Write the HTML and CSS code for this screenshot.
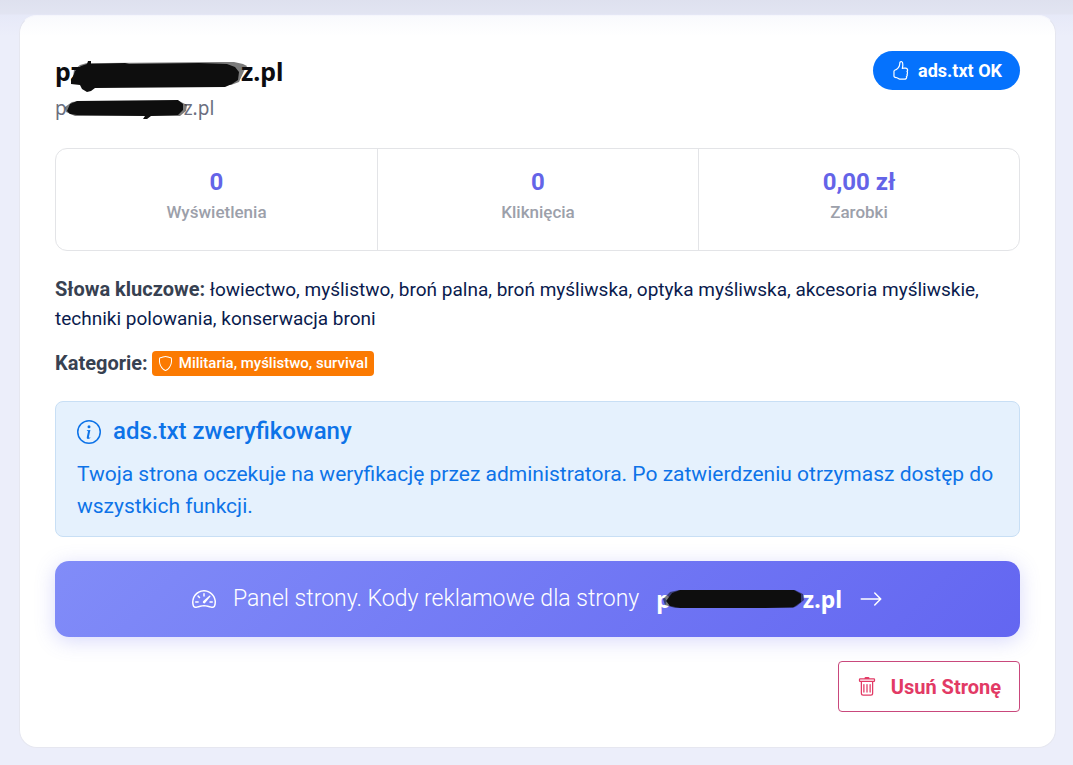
FILE: index.html
```html
<!DOCTYPE html>
<html lang="pl">
<head>
<meta charset="utf-8">
<meta name="viewport" content="width=device-width, initial-scale=1">
<title>Panel strony</title>
<link rel="stylesheet" href="styles.css">
</head>
<body>
<main class="site-card">
  <header class="site-header">
    <div>
      <h1 class="site-name">pz<span class="mask mask-title"><svg viewBox="0 0 178 34" preserveAspectRatio="none" aria-hidden="true"><path class="fray" d="M3 12 9 7 16 5 34 5 150 4 163 4 172 6 176 8 173 13 168 24 160 27 20 27 8 24 2 19Z"/><path d="M2 19 4 13 10 8 16 6 17 3h3v3l34-1 4 1 70-1 28 1 8 3 4 5-1 8-6 4-7 3-130 1-4 3-4 1-5-3-2-4-9-1-5 1Z"/></svg></span>z.pl</h1>
      <p class="site-domain">p<span class="mask mask-domain"><svg viewBox="0 0 126 22" preserveAspectRatio="none" aria-hidden="true"><path class="fray" d="M0 9 7 4 16 3h98l8 4-1 6-6 5H10L1 14Z"/><path d="M2 13 5 6l7-3 101-1 5 4v6l-5 5-27 1-4 3h-4l2-3-68-1-7-1Z"/></svg></span>z.pl</p>
    </div>
    <span class="status-pill">
      <svg class="icon" viewBox="0 0 16 16" aria-hidden="true"><path d="M8.864.046C7.908-.193 7.02.53 6.956 1.466c-.072 1.051-.23 2.016-.428 2.59-.125.36-.479 1.013-1.04 1.639-.557.623-1.282 1.178-2.131 1.41C2.685 7.288 2 7.87 2 8.72v4.001c0 .845.682 1.464 1.448 1.545 1.07.114 1.564.415 2.068.723l.048.03c.272.165.578.348.97.484.397.136.861.217 1.466.217h3.5c.937 0 1.599-.477 1.934-1.064a1.86 1.86 0 0 0 .254-.912c0-.152-.023-.312-.077-.464.201-.263.38-.578.488-.901.11-.33.172-.762.004-1.149.069-.13.12-.269.159-.403.077-.27.113-.568.113-.857 0-.288-.036-.585-.113-.856a2 2 0 0 0-.138-.362 1.9 1.9 0 0 0 .234-1.734c-.206-.592-.682-1.1-1.2-1.272-.847-.282-1.803-.276-2.516-.211a10 10 0 0 0-.443.05 9.4 9.4 0 0 0-.062-4.509A1.38 1.38 0 0 0 9.125.111zM11.5 14.721H8c-.51 0-.863-.069-1.14-.164-.281-.097-.506-.228-.776-.393l-.04-.024c-.555-.339-1.198-.731-2.49-.868-.333-.036-.554-.29-.554-.55V8.72c0-.254.226-.543.62-.65 1.095-.3 1.977-.996 2.614-1.708.635-.71 1.064-1.475 1.238-1.978.243-.7.407-1.768.482-2.85.025-.362.36-.594.667-.518l.262.066c.16.04.258.143.288.255a8.34 8.34 0 0 1-.145 4.725.5.5 0 0 0 .595.644l.003-.001.014-.003.058-.014a9 9 0 0 1 1.036-.157c.663-.06 1.457-.054 2.11.164.175.058.45.3.57.65.107.308.087.67-.266 1.022l-.353.353.353.354c.043.043.105.141.154.315.048.167.075.37.075.581 0 .212-.027.414-.075.582-.05.174-.111.272-.154.315l-.353.353.353.354c.047.047.109.177.005.488a2.2 2.2 0 0 1-.505.805l-.353.353.353.354c.006.005.041.05.041.17a.9.9 0 0 1-.121.416c-.165.288-.503.56-1.066.56z"/></svg>
      ads.txt OK
    </span>
  </header>

  <dl class="stats">
    <div class="stat"><dt>Wyświetlenia</dt><dd>0</dd></div>
    <div class="stat"><dt>Kliknięcia</dt><dd>0</dd></div>
    <div class="stat"><dt>Zarobki</dt><dd>0,00 zł</dd></div>
  </dl>

  <p class="detail"><strong>Słowa kluczowe:</strong> łowiectwo, myślistwo, broń palna, broń myśliwska, optyka myśliwska, akcesoria myśliwskie, techniki polowania, konserwacja broni</p>
  <div class="detail category">
    <strong>Kategorie:</strong>
    <span class="tag">
      <svg class="icon" viewBox="0 0 16 16" aria-hidden="true"><path d="M5.338 1.59a61 61 0 0 0-2.837.856.48.48 0 0 0-.328.39c-.554 4.157.726 7.19 2.253 9.188a10.7 10.7 0 0 0 2.287 2.233c.346.244.652.42.893.533q.18.085.293.118a1 1 0 0 0 .101.025 1 1 0 0 0 .1-.025q.114-.034.294-.118c.24-.113.547-.29.893-.533a10.7 10.7 0 0 0 2.287-2.233c1.527-1.997 2.807-5.031 2.253-9.188a.48.48 0 0 0-.328-.39c-.651-.213-1.75-.56-2.837-.855C9.552 1.29 8.531 1.067 8 1.067c-.53 0-1.552.223-2.662.524zM5.072.56C6.157.265 7.31 0 8 0s1.843.265 2.928.56c1.11.3 2.229.655 2.887.87a1.54 1.54 0 0 1 1.044 1.262c.596 4.477-.787 7.795-2.465 9.99a11.8 11.8 0 0 1-2.517 2.453 7 7 0 0 1-1.048.625c-.28.132-.581.24-.829.24s-.548-.108-.829-.24a7 7 0 0 1-1.048-.625 11.8 11.8 0 0 1-2.517-2.453C1.928 10.487.545 7.169 1.141 2.692A1.54 1.54 0 0 1 2.185 1.43 63 63 0 0 1 5.072.56"/></svg>
      Militaria, myślistwo, survival
    </span>
  </div>

  <section class="notice">
    <h2 class="notice-title">
      <svg class="icon" viewBox="0 0 16 16" aria-hidden="true"><path d="M8 15A7 7 0 1 1 8 1a7 7 0 0 1 0 14m0 1A8 8 0 1 0 8 0a8 8 0 0 0 0 16"/><path d="m8.93 6.588-2.29.287-.082.38.45.083c.294.07.352.176.288.469l-.738 3.468c-.194.897.105 1.319.808 1.319.545 0 1.178-.252 1.465-.598l.088-.416c-.2.176-.492.246-.686.246-.275 0-.375-.193-.304-.533zM9 4.5a1 1 0 1 1-2 0 1 1 0 0 1 2 0"/></svg>
      ads.txt zweryfikowany
    </h2>
    <p class="notice-text">Twoja strona oczekuje na weryfikację przez administratora. Po zatwierdzeniu otrzymasz dostęp do wszystkich funkcji.</p>
  </section>

  <a class="panel-link" href="#">
    <svg class="icon" viewBox="0 0 16 16" aria-hidden="true"><path d="M8 4a.5.5 0 0 1 .5.5V6a.5.5 0 0 1-1 0V4.5A.5.5 0 0 1 8 4M3.732 5.732a.5.5 0 0 1 .707 0l.915.914a.5.5 0 1 1-.708.708l-.914-.915a.5.5 0 0 1 0-.707M2 10a.5.5 0 0 1 .5-.5h1.586a.5.5 0 0 1 0 1H2.5A.5.5 0 0 1 2 10m9.5 0a.5.5 0 0 1 .5-.5h1.5a.5.5 0 0 1 0 1H12a.5.5 0 0 1-.5-.5m.754-4.246a.39.39 0 0 0-.527-.02L7.547 9.31a.91.91 0 1 0 1.302 1.258l3.434-4.297a.39.39 0 0 0-.029-.518z"/><path fill-rule="evenodd" d="M0 10a8 8 0 1 1 15.547 2.661c-.442 1.253-1.845 1.602-2.932 1.25C11.309 13.488 9.475 13 8 13c-1.474 0-3.31.488-4.615.911-1.087.352-2.49.003-2.932-1.25A8 8 0 0 1 0 10m8-7a7 7 0 0 0-6.603 9.329c.203.575.923.876 1.68.63C4.397 12.533 6.358 12 8 12s3.604.532 4.923.96c.757.245 1.477-.056 1.68-.631A7 7 0 0 0 8 3"/></svg>
    <span>Panel strony. Kody reklamowe dla strony</span>
    <strong>p<span class="mask mask-link"><svg viewBox="0 0 140 22" preserveAspectRatio="none" aria-hidden="true"><path class="fray" d="M0 10 7 3 16 1h114l8 4 1 6-7 6-4 2H12L2 16Z"/><path d="m3 12 6-8 8-3h112l7 4v8l-7 5-28 1H17L7 17Z"/></svg></span>z.pl</strong>
    <svg class="icon" viewBox="0 0 16 16" aria-hidden="true"><path fill-rule="evenodd" d="M1 8a.5.5 0 0 1 .5-.5h11.793l-3.147-3.146a.5.5 0 0 1 .708-.708l4 4a.5.5 0 0 1 0 .708l-4 4a.5.5 0 0 1-.708-.708L13.293 8.5H1.5A.5.5 0 0 1 1 8"/></svg>
  </a>

  <button class="delete-button" type="button">
    <svg class="icon" viewBox="0 0 16 16" aria-hidden="true"><path d="M5.5 5.5A.5.5 0 0 1 6 6v6a.5.5 0 0 1-1 0V6a.5.5 0 0 1 .5-.5m2.5 0a.5.5 0 0 1 .5.5v6a.5.5 0 0 1-1 0V6a.5.5 0 0 1 .5-.5m3 .5a.5.5 0 0 0-1 0v6a.5.5 0 0 0 1 0z"/><path d="M14.5 3a1 1 0 0 1-1 1H13v9a2 2 0 0 1-2 2H5a2 2 0 0 1-2-2V4h-.5a1 1 0 0 1-1-1V2a1 1 0 0 1 1-1H6a1 1 0 0 1 1-1h2a1 1 0 0 1 1 1h3.5a1 1 0 0 1 1 1zM4.118 4 4 4.059V13a1 1 0 0 0 1 1h6a1 1 0 0 0 1-1V4.059L11.882 4zM2.5 3h11V2h-11z"/></svg>
    Usuń Stronę
  </button>
</main>
</body>
</html>
```

FILE: styles.css
```css
* {
  box-sizing: border-box;
}

body {
  margin: 0;
  padding: 15px 17px 17px 19px;
  background: #eceefa;
  color: #0a1b4d;
  font-family: Roboto, "Liberation Sans", sans-serif;
}

/* Soft shadow falling from the top edge of the window */
body::before {
  content: "";
  position: absolute;
  top: 0;
  left: 0;
  right: 0;
  height: 36px;
  background: linear-gradient(rgba(40, 50, 90, 0.07), rgba(40, 50, 90, 0.05) 14px, rgba(90, 110, 200, 0.04) 15px, rgba(90, 110, 200, 0));
  pointer-events: none;
}

h1,
h2,
p,
dl,
dd {
  margin: 0;
}

.icon {
  flex: none;
  fill: currentColor;
}

.site-card {
  display: flex;
  flex-direction: column;
  padding: 35px;
  background: #fff;
  border: 1px solid #e6e7f0;
  border-top-color: #fbfbfe;
  border-radius: 18px;
}

.site-header {
  display: flex;
  justify-content: space-between;
  align-items: flex-start;
  margin-bottom: 22px;
}

.site-name {
  color: #0c0c10;
  font: 700 25px/40px "Noto Sans", sans-serif;
}

.site-domain {
  color: #6b6f80;
  font: 400 19px/35px "Noto Sans", sans-serif;
}

.mask {
  display: inline-block;
  position: relative;
  height: 1em;
  vertical-align: baseline;
}

.mask svg {
  position: absolute;
  fill: #0e0e0e;
}

.mask .fray {
  opacity: 0.55;
}

.mask-title {
  width: 158px;
}

.mask-title svg {
  left: -12px;
  top: 2px;
  width: 178px;
  height: 34px;
}

.mask-domain {
  width: 117px;
}

.mask-domain svg {
  left: -2px;
  top: 2px;
  width: 126px;
  height: 22px;
}

.mask-link {
  width: 132px;
}

.mask-link svg {
  left: -8px;
  top: 4px;
  width: 142px;
  height: 22px;
}

.status-pill {
  display: flex;
  align-items: center;
  gap: 8px;
  height: 39px;
  padding: 0 18px;
  border-radius: 20px;
  background: #0572fd;
  color: #fff;
  font-size: 18px;
  font-weight: 700;
}

.status-pill .icon {
  width: 19px;
  height: 19px;
}

.stats {
  display: grid;
  grid-template-columns: repeat(3, 1fr);
  margin-bottom: 24px;
  border: 1px solid #e3e4e7;
  border-radius: 12px;
}

.stat {
  display: flex;
  flex-direction: column-reverse;
  padding: 17px 16px 24px;
  text-align: center;
}

.stat + .stat {
  border-left: 1px solid #e3e4e7;
}

.stat dt {
  color: #9ca0aa;
  font-size: 17px;
  font-weight: 500;
  line-height: 27px;
}

.stat dd {
  color: #6464e8;
  font-size: 24px;
  font-weight: 700;
  line-height: 33px;
}

.detail {
  margin-bottom: 16px;
  font-size: 19px;
  line-height: 29px;
}

.detail strong {
  color: #374151;
  font-size: 20px;
  font-weight: 700;
}

.category {
  display: flex;
  align-items: center;
  gap: 4px;
  margin-bottom: 24px;
  line-height: 28px;
}

.tag {
  display: flex;
  align-items: center;
  gap: 6px;
  height: 25px;
  padding: 0 6px;
  border-radius: 4px;
  background: #fb7a02;
  color: #fff;
  font-size: 15px;
  font-weight: 500;
}

.tag .icon {
  width: 15px;
  height: 15px;
}

.notice {
  margin-bottom: 24px;
  padding: 14px 21px;
  border: 1px solid #c8dff5;
  border-radius: 8px;
  background: #e5f1fd;
  color: #0d73e8;
}

.notice-title {
  display: flex;
  align-items: center;
  gap: 12px;
  margin-bottom: 11px;
  font-size: 24px;
  font-weight: 500;
  line-height: 31px;
}

.notice-title .icon {
  width: 24px;
  height: 24px;
}

.notice-text {
  font-size: 21px;
  line-height: 32px;
}

.panel-link {
  display: flex;
  align-items: center;
  justify-content: center;
  gap: 17px;
  min-height: 76px;
  margin-bottom: 24px;
  border-radius: 14px;
  background: linear-gradient(135deg, #818cf8, #6366f1);
  box-shadow: 0 4px 20px rgba(99, 102, 241, 0.25);
  color: #fff;
  font-size: 23px;
  font-weight: 300;
  line-height: 36px;
  text-decoration: none;
}

.panel-link strong {
  font-family: "Noto Sans", sans-serif;
  font-weight: 700;
}

.panel-link .icon {
  width: 24px;
  height: 24px;
}

.delete-button {
  display: flex;
  align-items: center;
  align-self: flex-end;
  gap: 14px;
  height: 51px;
  padding: 0 18px;
  border: 1px solid #c9487c;
  border-radius: 4px;
  background: #fff;
  color: #e23a65;
  font: 700 20px/30px Roboto, "Liberation Sans", sans-serif;
}

.delete-button .icon {
  width: 20px;
  height: 20px;
}
```
